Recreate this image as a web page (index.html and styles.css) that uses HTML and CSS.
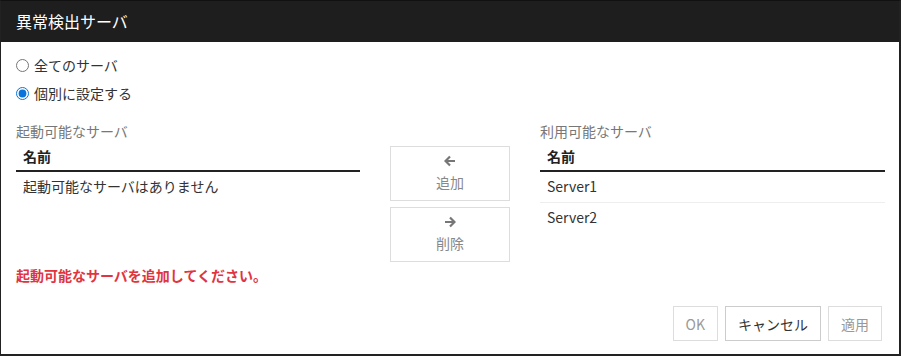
FILE: index.html
```html
<!DOCTYPE html>
<html lang="ja">
<head>
    <meta charset="UTF-8">
    <meta name="viewport" content="width=device-width, initial-scale=1.0">
    <title>異常検出サーバ</title>
    <link rel="stylesheet" href="styles.css">
</head>
<body>
    <div class="dialog">
        <div class="dialog-header">異常検出サーバ</div>
        <div class="dialog-body">
            <label class="radio-row">
                <input type="radio" name="target" value="all">
                <span>全てのサーバ</span>
            </label>
            <label class="radio-row">
                <input type="radio" name="target" value="each" checked>
                <span>個別に設定する</span>
            </label>

            <div class="transfer">
                <div class="panel">
                    <div class="panel-title">起動可能なサーバ</div>
                    <div class="list-head">名前</div>
                    <div class="list-row">起動可能なサーバはありません</div>
                </div>

                <div class="move-buttons">
                    <button class="move-btn" disabled>
                        <svg width="12" height="12" viewBox="0 0 12 12"><path d="M11 6H2M6 1.5L1.5 6 6 10.5" fill="none" stroke="#777" stroke-width="2.2"/></svg>
                        <span>追加</span>
                    </button>
                    <button class="move-btn" disabled>
                        <svg width="12" height="12" viewBox="0 0 12 12"><path d="M1 6h9M6 1.5L10.5 6 6 10.5" fill="none" stroke="#777" stroke-width="2.2"/></svg>
                        <span>削除</span>
                    </button>
                </div>

                <div class="panel">
                    <div class="panel-title">利用可能なサーバ</div>
                    <div class="list-head">名前</div>
                    <div class="list-row">Server1</div>
                    <div class="list-row">Server2</div>
                </div>
            </div>

            <div class="error">起動可能なサーバを追加してください。</div>

            <div class="footer">
                <button class="btn" disabled>OK</button>
                <button class="btn">キャンセル</button>
                <button class="btn" disabled>適用</button>
            </div>
        </div>
    </div>
</body>
</html>
```

FILE: styles.css
```css
body {
    margin: 0;
    font-family: "Noto Sans CJK JP", "Liberation Sans", sans-serif;
    font-size: 14px;
    color: #333;
    background: #fff;
}
.dialog {
    width: 901px;
    height: 356px;
    box-sizing: border-box;
    border-top: 1px solid #111;
    border-left: 1px solid #222;
    border-right: 2px solid #222;
    border-bottom: 2px solid #222;
    background: #fff;
}
.dialog-header {
    height: 41px;
    line-height: 41px;
    padding-left: 15px;
    background: #1e1e1e;
    color: #fff;
    font-size: 16px;
}
.dialog-body {
    padding: 13px 14px 0 15px;
}
.radio-row {
    display: flex;
    align-items: center;
    height: 20px;
    margin-bottom: 8px;
}
.radio-row input {
    width: 13px;
    height: 13px;
    margin: 0 5px 0 0;
    accent-color: #0a74da;
}
.transfer {
    display: grid;
    grid-template-columns: 344px 120px 345px;
    column-gap: 30px;
    margin-top: 18px;
}
.panel-title {
    color: #777;
    line-height: 20px;
}
.list-head {
    font-weight: bold;
    color: #222;
    padding: 5px 7px 0;
    height: 24px;
    border-bottom: 2px solid #222;
}
.list-row {
    height: 30px;
    line-height: 29px;
    padding: 0 7px;
    border-bottom: 1px solid #eee;
}
.panel .list-row:last-child {
    border-bottom: none;
}
.move-buttons {
    display: flex;
    flex-direction: column;
    gap: 6px;
    margin-top: 25px;
}
.move-btn {
    height: 55px;
    display: flex;
    flex-direction: column;
    align-items: center;
    justify-content: center;
    gap: 5px;
    background: #fff;
    border: 1px solid #ddd;
    color: #888;
    font-family: inherit;
    font-size: 14px;
    padding: 0;
}
.error {
    margin-top: 3px;
    color: #e0353f;
    font-weight: bold;
    line-height: 20px;
}
.footer {
    display: flex;
    justify-content: flex-end;
    gap: 7px;
    margin-top: 21px;
    padding-right: 3px;
}
.btn {
    height: 35px;
    padding: 0 12px;
    background: #fff;
    border: 1px solid #ccc;
    color: #333;
    font-family: inherit;
    font-size: 14px;
}
.btn:disabled {
    border-color: #ddd;
    color: #999;
}
```
